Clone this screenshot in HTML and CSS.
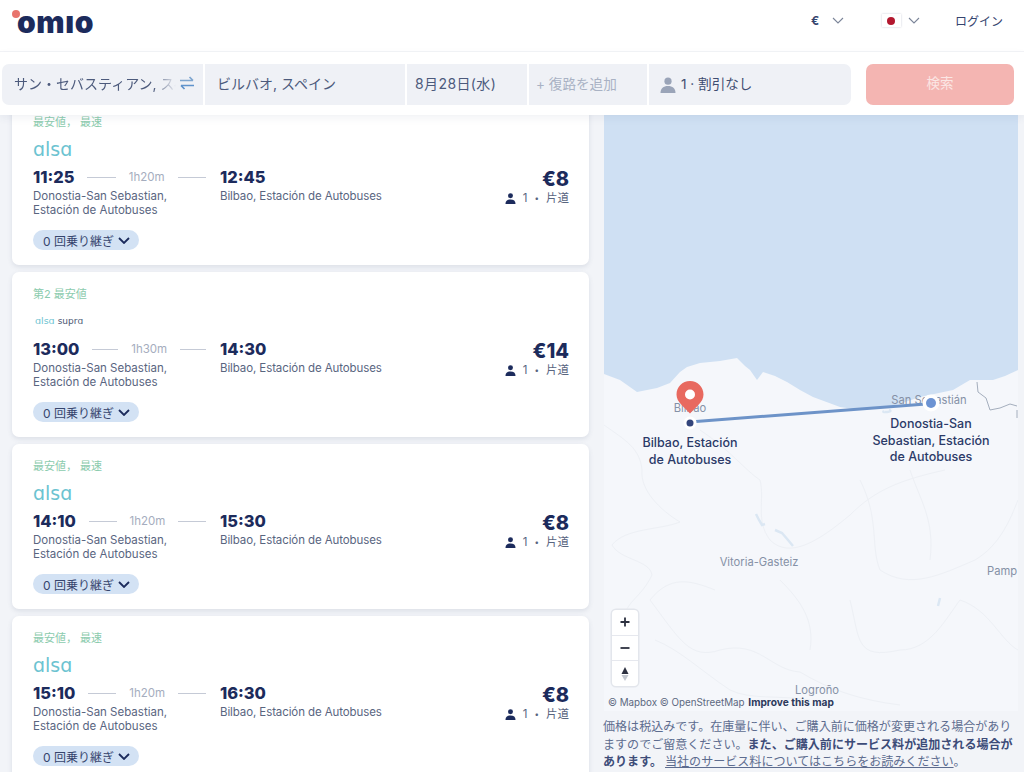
FILE: index.html
```html
<!DOCTYPE html>
<html lang="ja">
<head>
<meta charset="utf-8">
<title>Omio</title>
<link rel="stylesheet" href="styles.css">
</head>
<body>
<div class="page">
  <header class="topbar">
    <div class="logo"><span class="logo-dot"></span><span class="logo-text">omıo</span></div>
    <nav class="topnav">
      <span class="cur">€</span>
      <svg class="chev cur-chev" viewBox="0 0 12 7"><path d="M1 1l5 5 5-5"/></svg>
      <span class="flag"><span class="flag-sun"></span></span>
      <svg class="chev flag-chev" viewBox="0 0 12 7"><path d="M1 1l5 5 5-5"/></svg>
      <span class="login">ログイン</span>
    </nav>
  </header>

  <section class="searchbar">
    <div class="fields">
      <div class="field f-from"><span class="from-text">サン・セバスティアン, スペイン</span>
        <svg class="swap" viewBox="0 0 16 14"><path class="swap-a" d="M1 4.500h13M10.500 1L14 4.500"/><path class="swap-b" d="M15 9.500H2M5.500 13L2 9.500"/></svg>
      </div>
      <div class="field f-to">ビルバオ, スペイン</div>
      <div class="field f-date">8月28日(水)</div>
      <div class="field f-ret">+ 復路を追加</div>
      <div class="field f-pax">
        <svg class="pax-ico" viewBox="0 0 16 16"><circle cx="8" cy="4.200" r="3.600"/><path d="M0.500 16c0-4.600 3-7 7.500-7s7.500 2.400 7.500 7z"/></svg>
        <span>1 · 割引なし</span>
      </div>
    </div>
    <button class="search-btn">検索</button>
  </section>

  <main class="main">
    <div class="list">
      <article class="card">
        <div class="tag">最安値， 最速</div>
        <div class="brand"><span class="alsa">ɑlsɑ</span></div>
        <div class="body">
          <div class="col-dep">
            <div class="timeline"><b class="time">11:25</b><i class="rule"></i><span class="dur">1h20m</span><i class="rule"></i></div>
            <div class="station">Donostia-San Sebastian,<br>Estación de Autobuses</div>
          </div>
          <div class="col-arr">
            <b class="time">12:45</b>
            <div class="station">Bilbao, Estación de Autobuses</div>
          </div>
          <div class="col-price">
            <b class="price">€8</b>
            <div class="pax"><svg class="mini" viewBox="0 0 12 12"><circle cx="6" cy="3" r="2.700"/><path d="M0.500 12c0-3.500 2-5 5.500-5s5.500 1.500 5.500 5z"/></svg><span>1</span><span class="dot">•</span><span>片道</span></div>
          </div>
        </div>
        <div class="pill">0 回乗り継ぎ <svg class="pill-chev" viewBox="0 0 12 7"><path d="M1 1l5 5 5-5"/></svg></div>
      </article>

      <article class="card">
        <div class="tag">第2 最安値</div>
        <div class="brand"><span class="alsa alsa-sm">ɑlsɑ</span><span class="supra">suprɑ</span></div>
        <div class="body">
          <div class="col-dep">
            <div class="timeline"><b class="time">13:00</b><i class="rule"></i><span class="dur">1h30m</span><i class="rule"></i></div>
            <div class="station">Donostia-San Sebastian,<br>Estación de Autobuses</div>
          </div>
          <div class="col-arr">
            <b class="time">14:30</b>
            <div class="station">Bilbao, Estación de Autobuses</div>
          </div>
          <div class="col-price">
            <b class="price">€14</b>
            <div class="pax"><svg class="mini" viewBox="0 0 12 12"><circle cx="6" cy="3" r="2.700"/><path d="M0.500 12c0-3.500 2-5 5.500-5s5.500 1.500 5.500 5z"/></svg><span>1</span><span class="dot">•</span><span>片道</span></div>
          </div>
        </div>
        <div class="pill">0 回乗り継ぎ <svg class="pill-chev" viewBox="0 0 12 7"><path d="M1 1l5 5 5-5"/></svg></div>
      </article>

      <article class="card">
        <div class="tag">最安値， 最速</div>
        <div class="brand"><span class="alsa">ɑlsɑ</span></div>
        <div class="body">
          <div class="col-dep">
            <div class="timeline"><b class="time">14:10</b><i class="rule"></i><span class="dur">1h20m</span><i class="rule"></i></div>
            <div class="station">Donostia-San Sebastian,<br>Estación de Autobuses</div>
          </div>
          <div class="col-arr">
            <b class="time">15:30</b>
            <div class="station">Bilbao, Estación de Autobuses</div>
          </div>
          <div class="col-price">
            <b class="price">€8</b>
            <div class="pax"><svg class="mini" viewBox="0 0 12 12"><circle cx="6" cy="3" r="2.700"/><path d="M0.500 12c0-3.500 2-5 5.500-5s5.500 1.500 5.500 5z"/></svg><span>1</span><span class="dot">•</span><span>片道</span></div>
          </div>
        </div>
        <div class="pill">0 回乗り継ぎ <svg class="pill-chev" viewBox="0 0 12 7"><path d="M1 1l5 5 5-5"/></svg></div>
      </article>

      <article class="card">
        <div class="tag">最安値， 最速</div>
        <div class="brand"><span class="alsa">ɑlsɑ</span></div>
        <div class="body">
          <div class="col-dep">
            <div class="timeline"><b class="time">15:10</b><i class="rule"></i><span class="dur">1h20m</span><i class="rule"></i></div>
            <div class="station">Donostia-San Sebastian,<br>Estación de Autobuses</div>
          </div>
          <div class="col-arr">
            <b class="time">16:30</b>
            <div class="station">Bilbao, Estación de Autobuses</div>
          </div>
          <div class="col-price">
            <b class="price">€8</b>
            <div class="pax"><svg class="mini" viewBox="0 0 12 12"><circle cx="6" cy="3" r="2.700"/><path d="M0.500 12c0-3.500 2-5 5.500-5s5.500 1.500 5.500 5z"/></svg><span>1</span><span class="dot">•</span><span>片道</span></div>
          </div>
        </div>
        <div class="pill">0 回乗り継ぎ <svg class="pill-chev" viewBox="0 0 12 7"><path d="M1 1l5 5 5-5"/></svg></div>
      </article>
    </div>

    <aside class="side">
      <div class="map">
        <svg class="map-svg" viewBox="604 115 414 596">
          <rect class="sea" x="604" y="115" width="414" height="596"/>
          <path class="land" d="M604 374L620 380 637 392 657 388 670 383 680 372 687 367 700 363 720 361 737 358 745 366 750 370 757 380 763 372 775 376 787 382 800 390 813 397 840 407 860 410 883 408 905 402 920 397 953 390 970 380 993 380 1005 376 1018 370V711H604Z"/>
          <g class="admin">
            <path d="M604 425C625 440 640 448 642 470 640 490 660 510 680 522 660 530 625 528 612 545 620 560 650 560 652 575 640 600 625 600 622 625"/>
            <path d="M700 430C730 450 745 470 760 480 765 500 755 520 770 540 790 560 820 540 850 515 875 490 900 480 945 470"/>
            <path d="M860 480C880 520 870 545 880 570 910 590 940 575 975 560 1000 545 1010 520 1018 500"/>
            <path d="M715 590C690 580 670 575 650 600 680 640 690 660 720 650 760 640 770 670 800 672 830 690 860 700 900 705"/>
            <path d="M850 600C860 640 855 660 900 650 930 650 945 620 960 600 990 610 1000 640 1018 650"/>
            <path d="M780 580C800 600 815 620 810 650"/>
            <path d="M910 470C920 500 935 520 930 560"/>
            <path d="M655 640C680 650 700 670 730 690 750 700 780 695 810 700"/>
          </g>
          <path class="border" d="M977 382L978 392 986 398 990 410 1000 408 1010 404 1017 406M1017 410V418"/>
          <g class="water">
            <path d="M756 514L759 520 762 525 765 524"/>
            <path d="M775 530L782 533 788 540 793 546"/>
            <path d="M940 598L938 606"/>
            <path d="M889 410C895 412 880 413 884 411"/>
          </g>
          <text class="mlabel" x="690" y="412" text-anchor="middle">Bilbao</text>
          <text class="mlabel" x="929" y="404" text-anchor="middle">San Sebastián</text>
          <text class="mlabel" x="759" y="566" text-anchor="middle">Vitoria-Gasteiz</text>
          <text class="mlabel" x="987" y="575">Pamp</text>
          <text class="mlabel" x="817" y="694" text-anchor="middle">Logroño</text>
          <path class="route" d="M696 421.500L926 404"/>
          <circle class="ring" cx="931" cy="403" r="8.500"/>
          <circle class="end-dot" cx="931" cy="403" r="5"/>
          <circle class="ring" cx="690" cy="423" r="6.500"/>
          <circle class="start-dot" cx="690" cy="423" r="3.500"/>
          <path class="pin" d="M690 381c-7.700 0-13.500 6-13.500 13.500 0 8 8 12.500 13.500 19 5.500-6.500 13.500-11 13.500-19C703.500 387 697.700 381 690 381z"/>
          <circle class="ring" cx="690" cy="394.500" r="5"/>
          <text class="place" text-anchor="middle"><tspan x="690" y="447">Bilbao, Estación</tspan><tspan x="690" y="464">de Autobuses</tspan></text>
          <text class="place" text-anchor="middle"><tspan x="931" y="428">Donostia-San</tspan><tspan x="931" y="445">Sebastian, Estación</tspan><tspan x="931" y="461">de Autobuses</tspan></text>
        </svg>
        <div class="zoomctl">
          <span class="zbtn"><svg viewBox="0 0 10 10"><path d="M5 0.500v9M0.500 5h9"/></svg></span>
          <span class="zbtn"><svg viewBox="0 0 10 10"><path d="M0.500 5h9"/></svg></span>
          <span class="zbtn"><svg class="compass" viewBox="0 0 8 14"><path class="cn" d="M4 0L7.500 7H.5z"/><path class="cs" d="M.5 8h7L4 14z"/></svg></span>
        </div>
        <div class="attrib">© Mapbox © OpenStreetMap <b>Improve this map</b></div>
      </div>
      <p class="notice">価格は税込みです。在庫量に伴い、ご購入前に価格が変更される場合がありますのでご留意ください。<b>また、ご購入前にサービス料が追加される場合があります。</b><a>当社のサービス料についてはこちらをお読みください</a>。</p>
    </aside>
  </main>
</div>
</body>
</html>
```
FILE: styles.css
```css
* { box-sizing: border-box; }
html, body { margin: 0; height: 100%; }
body {
  font-family: Inter, "Noto Sans CJK JP", sans-serif;
  color: #1c2b5c;
  background: #f2f4f8;
}
.page { width: 1024px; height: 772px; overflow: hidden; display: flex; flex-direction: column; }

.topbar {
  height: 52px; flex: none; background: #fff; border-bottom: 1px solid #f3f4f7;
  display: flex; justify-content: space-between; align-items: center;
  padding: 0 21px 10px 12px;
}
.logo { position: relative; width: 82px; height: 40px; top: 2px; }
.logo-dot { position: absolute; left: 0; top: 7px; width: 8px; height: 8px; border-radius: 50%; background: #e8746c; }
.logo-text {
  position: absolute; left: 5px; top: 0; font-size: 30px; line-height: 38px; font-weight: 900;
  color: #1c2b5c; letter-spacing: 0.6px;
}
.topnav { display: flex; align-items: center; font-size: 12px; color: #35446e; }
.cur { font-weight: 700; font-size: 12px; width: 21px; }
.chev { width: 12px; height: 7px; fill: none; stroke: #7b8599; stroke-width: 1.1; }
.cur-chev { margin-right: 38px; }
.flag { width: 19px; height: 13px; background: #fff; box-shadow: 0 0 2px #c9ced8; display: flex; align-items: center; justify-content: center; margin-right: 7px; }
.flag-sun { width: 8px; height: 8px; border-radius: 50%; background: #b3182f; }
.flag-chev { margin-right: 35px; }

.searchbar {
  height: 63px; flex: none; background: #fff; position: relative; z-index: 2;
  display: flex; align-items: flex-start; padding: 12px 10px 0 2px;
  box-shadow: 0 3px 8px rgba(60, 75, 110, 0.07);
}
.fields { display: flex; gap: 2px; width: 849px; height: 41px; }
.field {
  background: #eff1f6; display: flex; align-items: center; font-size: 14px; color: #4c5a7c;
  height: 41px; white-space: nowrap; padding-bottom: 3px;
}
.f-from { width: 201px; padding-left: 12px; border-radius: 7px 0 0 7px; position: relative; overflow: hidden; }
.from-text { display: block; width: 162px; overflow: hidden; -webkit-mask-image: linear-gradient(90deg, #000 86%, transparent 100%); mask-image: linear-gradient(90deg, #000 86%, transparent 100%); }
.swap { position: absolute; left: 177px; top: 12px; width: 16px; height: 14px; fill: none; stroke-width: 1.7; }
.swap-a { stroke: #7fa6cf; }
.swap-b { stroke: #5f93cc; }
.f-to { width: 200px; padding-left: 12px; }
.f-date { width: 120px; padding-left: 8px; letter-spacing: 0.4px; }
.f-ret { width: 118px; padding-left: 7px; color: #a9b2c4; font-size: 13.6px; }
.f-pax { flex: 1; padding-left: 11px; border-radius: 0 7px 7px 0; color: #3f4d71; font-size: 13.6px; }
.pax-ico { width: 16px; height: 16px; fill: #9aa4b8; margin: 3px 5px 0 0; }
.search-btn {
  width: 148px; height: 41px; margin-left: 15px; border: 0; border-radius: 7px; padding: 0 0 5px;
  background: #f4b5b2; color: #fbe6e4; font: inherit; font-size: 13.5px;
}

.main { flex: 1; min-height: 0; display: flex; position: relative; overflow: hidden; }
.list { width: 604px; flex: none; padding: 0 15px 0 12px; display: flex; flex-direction: column; gap: 7px; margin-top: -15px; }
.card {
  height: 165px; flex: none; background: #fff; border-radius: 7px;
  box-shadow: 0 2px 5px rgba(60, 75, 110, 0.12);
  padding: 15px 20px 0 21px;
  display: flex; flex-direction: column;
}
.tag { font-size: 11px; line-height: 14px; color: #8ccbae; }
.brand { height: 26px; margin-top: 7px; display: flex; align-items: center; }
.alsa { font-size: 19px; line-height: 26px; color: #6cc3d1; font-family: "DejaVu Sans", sans-serif; }
.alsa-sm { font-size: 9.500px; margin-left: 2px; }
.supra { font-size: 9px; color: #4a5672; margin-left: 3px; font-family: "DejaVu Sans", sans-serif; }
.body { display: flex; margin-top: 4px; height: 56px; }
.col-dep { width: 187px; flex: none; }
.col-arr { flex: 1; }
.col-arr .station { letter-spacing: -0.1px; }
.timeline { display: flex; align-items: center; gap: 13px; height: 22px; padding-right: 14px; }
.time { font-size: 16.4px; line-height: 22px; font-weight: 800; color: #1c2b5c; display: block; }
.rule { flex: 1; height: 1px; background: #c5cad6; }
.dur { font-size: 11.500px; color: #a5adbe; }
.station { font-size: 11.500px; line-height: 14px; color: #59657f; margin-top: 1px; }
.col-price { text-align: right; width: 120px; display: flex; flex-direction: column; align-items: flex-end; padding-top: 1px; }
.price { font-size: 20px; line-height: 24px; font-weight: 800; color: #1c2b5c; }
.pax { display: flex; align-items: center; gap: 7px; font-size: 11.500px; line-height: 14px; color: #59657f; }
.mini { width: 11px; height: 11px; fill: #1c2b5c; }
.dot { font-size: 8px; }
.pill {
  align-self: flex-start; height: 20px; margin-top: 8px; padding: 0 9px 0 10px;
  background: #d3e2f4; border-radius: 10px; font-size: 12px; color: #36456d;
  display: flex; align-items: center; gap: 4px; white-space: nowrap;
}
.pill-chev { width: 12px; height: 7px; fill: none; stroke: #1c2b5c; stroke-width: 1.800; }

.side { flex: 1; display: flex; flex-direction: column; padding-right: 6px; }
.map { position: relative; width: 414px; height: 596px; flex: none; overflow: hidden; }
.map-svg { display: block; width: 414px; height: 596px; }
.sea { fill: #cfe0f3; }
.land { fill: #f5f7fb; }
.admin { fill: none; stroke: #edf0f5; stroke-width: 1; }
.border { fill: none; stroke: #a4aebd; stroke-width: 1; }
.water { fill: none; stroke: #dbe7f3; stroke-width: 2.500; }
.mlabel { font-size: 11.200px; fill: #8591a6; }
.place { font-size: 12.500px; font-weight: 500; fill: #2b3a68; }
.route { stroke: #6d93c8; stroke-width: 3; fill: none; }
.ring { fill: #fff; }
.end-dot { fill: #6c93d3; }
.start-dot { fill: #34467c; }
.pin { fill: #e8695f; }

.zoomctl {
  position: absolute; left: 8px; top: 495px; width: 26px; height: 76px; background: #fff;
  border-radius: 4px; box-shadow: 0 0 0 1.500px #e3e6ec;
  display: flex; flex-direction: column;
}
.zbtn { flex: 1; display: flex; align-items: center; justify-content: center; border-top: 1px solid #e6e8ee; }
.zbtn:first-child { border-top: 0; }
.zbtn svg { width: 10px; height: 10px; fill: none; stroke: #2d3140; stroke-width: 1.800; }
.zbtn .compass { width: 8px; height: 14px; stroke: none; }
.cn { fill: #2d3140; }
.cs { fill: #c3c7cf; }
.attrib { position: absolute; left: 4px; top: 580px; font-size: 9.800px; line-height: 14px; color: #5c6880; white-space: nowrap; }
.attrib b { color: #2d3a5c; font-weight: 700; margin-left: 1px; font-size: 10.200px; }

.notice { margin: 7px 0 0 -1px; width: 416px; font-size: 12.060px; line-height: 17.500px; color: #5d6c8f; }
.notice b { font-weight: 700; color: #3d4c78; }
.notice a { text-decoration: underline; color: #5d6c8f; margin-left: 3px; }
```
